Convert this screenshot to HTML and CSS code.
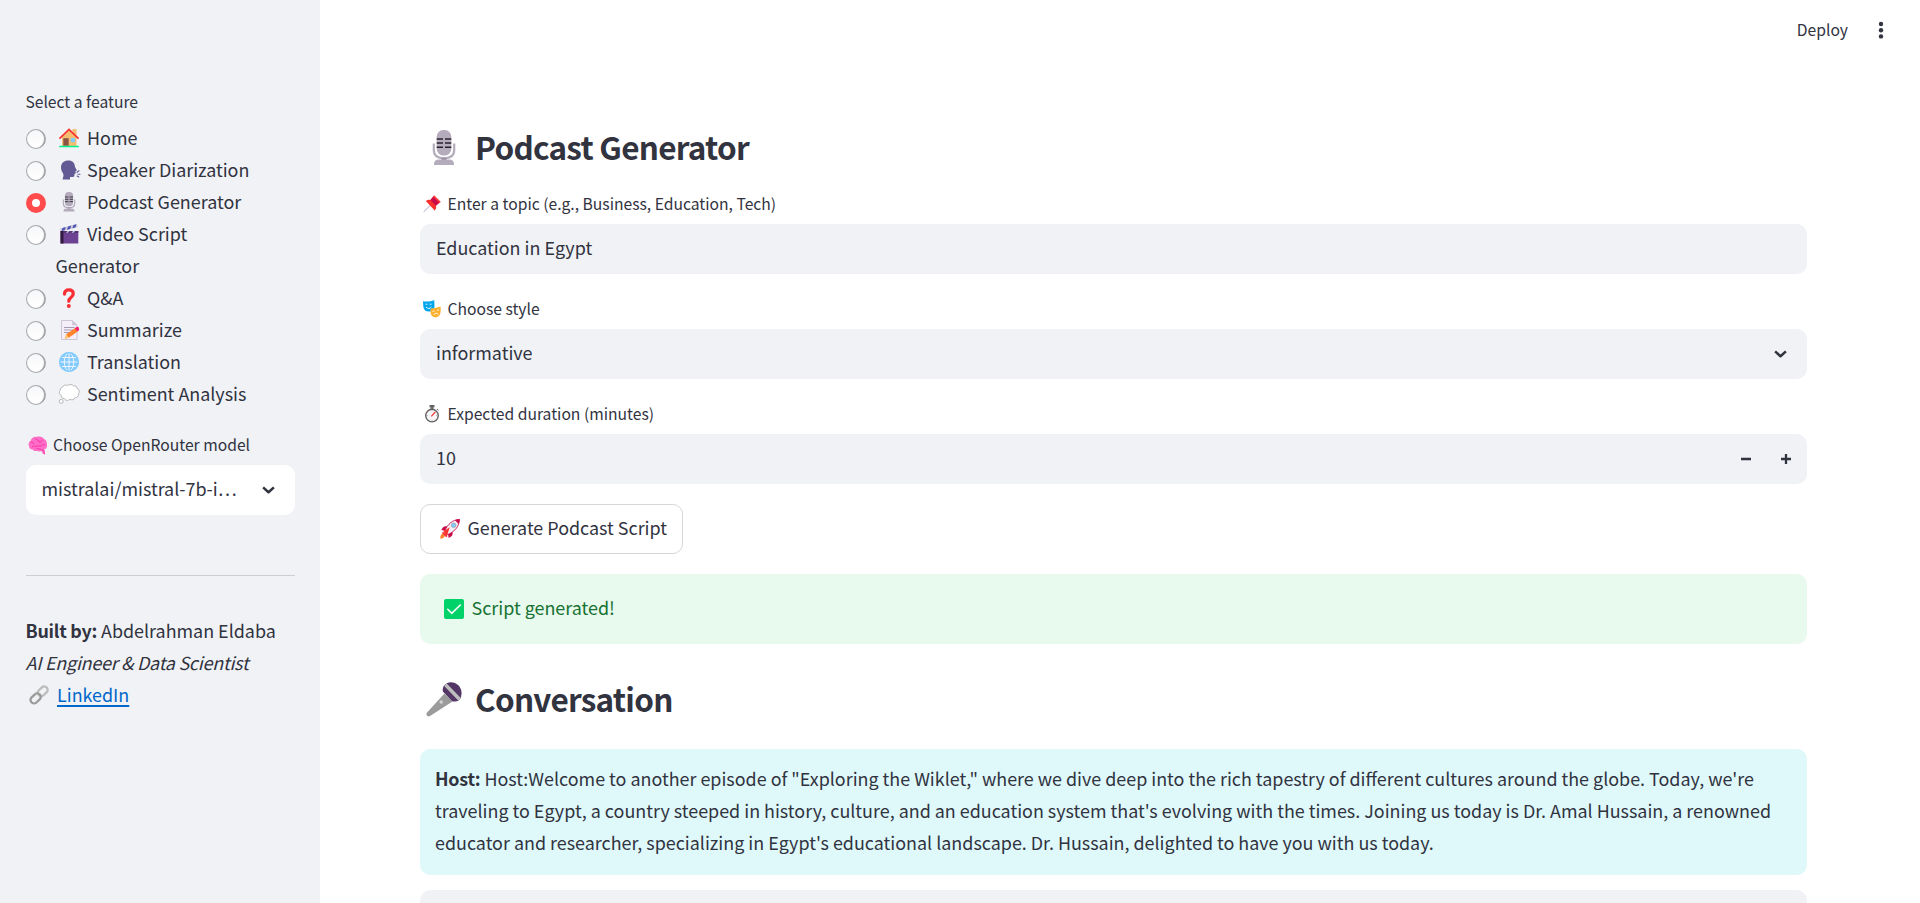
FILE: index.html
```html
<!DOCTYPE html>
<html lang="en">
<head>
<meta charset="utf-8">
<title>Podcast Generator</title>
<link rel="stylesheet" href="styles.css">
</head>
<body>
<svg class="defs" width="0" height="0" aria-hidden="true">
  <symbol id="home" viewBox="0 0 20 20">
    <path d="M13.5 1h4v7h-4zM3 9l7-7 7.5 7v10H3z" fill="#f3bd72"/>
    <path d="M4.3 10.2h5.4v7.6H4.3z" fill="#8c5543"/><path d="M11.8 10h4.2v4.2h-4.2z" fill="#83cbff"/>
    <path d="M1 10.2 10 1.5l9 8.700" fill="none" stroke="#f8312f" stroke-width="1.7" stroke-linecap="round"/>
    <rect y="17.8" width="20" height="1.5" rx=".7" fill="#00f38c"/>
  </symbol>
  <symbol id="speak" viewBox="0 0 20 20">
    <path d="M8 .5C3.500.5.500 3 .5 7.500c0 4 2.500 5 2.500 8 0 1.500-1 2.300-.8 4h7.300v-2.400h2.800c1.600 0 1.800-1 1.600-3l1.500-.8-.5-2 1.500-.7-2-3.800C14.500 3 12 .5 8 .5z" fill="#635994"/>
    <path d="m16.600 12.300 1.900-1.500M17.500 14.300h2M16.600 16l1.700 1" stroke="#635994" stroke-width="1.100" stroke-linecap="round"/>
  </symbol>
  <symbol id="studio" viewBox="0 0 36 36">
    <rect x="10.700" y="0" width="14.600" height="25.500" rx="6.500" fill="#b4acbc"/>
    <path d="M7.800 13.500v7c0 5 3.600 7.700 10.200 7.700s10.200-2.700 10.200-7.700v-7" fill="none" stroke="#b4acbc" stroke-width="2.200"/>
    <path d="M15.500 28h5v2h-5z" fill="#998ea4"/><path d="M8 35c0-4 1.500-5.500 5.500-5.500h9c4 0 5.500 1.500 5.500 5.500z" fill="#b4acbc"/>
    <path d="M10.700 9h6.300m2 0h6.300M10.700 13.100h6.300m2 0h6.300M10.700 17.300h6.300m2 0h6.300" stroke="#28212b" stroke-width="1.500"/>
  </symbol>
  <symbol id="clap" viewBox="0 0 20 20">
    <path d="m1 4.500 17-4.500.6 3L1.800 7.400z" fill="#cdc4d6"/><path d="m3.500 4 3.200-.9-1 3.200-3 .8zM9 2.500l3.200-.9-1 3.300-3.200.8zM14.400 1l3-.8-1 3.200-3 .8z" fill="#4a55b8"/>
    <path d="M1.500 7h17.800v12.500H1.500z" fill="#6d4292"/><path d="M1.500 7h3v12.500h-3z" fill="#321b41"/>
    <path d="M4.500 7h14.800v1.800H4.500z" fill="#533566"/><path d="m7 8.800 1.500-1.800h2l-1.500 1.800zm5.500 0 1.500-1.800h2l-1.500 1.800z" fill="#b9c4f4"/>
  </symbol>
  <symbol id="ques" viewBox="0 0 20 20">
    <path d="M5.500 6C5.500 3.200 7.200 1.900 9.800 1.900c2.800 0 4.400 1.400 4.400 3.900 0 4.200-4.400 3.200-4.400 7.400" fill="none" stroke="#f92f33" stroke-width="3.300" stroke-linecap="round"/>
    <circle cx="9.800" cy="17.900" r="2" fill="#f92f33"/>
  </symbol>
  <symbol id="memo" viewBox="0 0 20 20">
    <path d="M2.500.5h11L18 5v14.500H2.500z" fill="#f3eef8" stroke="#cdc4d6"/><path d="M13.200.5V5.300H18z" fill="#cdc4d6"/>
    <path d="M5 7.500h10.500M5 10h9M5 12.500h7" stroke="#a49bb5"/>
    <path d="m6 18.800 1.200-4.600 9-6.200 2.500 3.600-9 6.200z" fill="#ff822d"/><path d="m6 18.800 1.200-4.600 2.500 3.600z" fill="#ffce7c"/>
    <path d="m15.800 8.200 1.700-1.200c1.800-.8 3.800 1.700 2.300 3.200l-1.700 1.300z" fill="#f8246a"/>
  </symbol>
  <symbol id="globe" viewBox="0 0 20 20">
    <circle cx="10" cy="10" r="9.900" fill="#83cbff"/>
    <g fill="none" stroke="#eef6fd" stroke-width="1"><path d="M10 1v18M1 10h18M2.500 5.500h15M2.500 14.500h15"/><ellipse cx="10" cy="10" rx="4.700" ry="8.900"/></g>
    <circle cx="10" cy="10" r="9.200" fill="none" stroke="#83cbff" stroke-width="1.500"/>
  </symbol>
  <symbol id="cloud" viewBox="0 0 22 20">
    <g fill="#fff" stroke="#a7a7aa" stroke-width=".8"><path d="M4.500 3.200C5 1.200 8 .4 9.500 1.600 11 0 14.300.1 15.500 1.800c2-.4 3.600.7 3.500 2.700 2.300.5 3 3.900 1.300 5.400.6 2.200-1 3.800-3 3.600-1 2.400-3.800 3-5.300 1.600-1.700 2-4.800 1.500-5.700-.6-2 .3-3.300-1.200-2.900-3.100C.8 10.400.9 7.200 2.300 6.500c-.2-1.900.8-3.300 2.200-3.300z"/><circle cx="3.200" cy="17.400" r="2"/></g>
  </symbol>
  <symbol id="brain" viewBox="0 0 20 19">
    <path d="M1 10c-1-2 0-4.500 1.500-5C3.200 2 6 .2 9 .8c3-1 6 .2 7 2.200 2.200.7 3.300 3.200 2.800 5.200.8 2.300-.3 5-2.800 5.300l.5 4.500h-1.600l-1.200-3c-2 .8-3.200.5-4.500-.3-1.500.7-3.400.2-4.500-1.300C2.500 13.500 1 12 1 10z" fill="#ff6dc6"/>
    <path d="M3 6c1.500 0 2.500.8 2.500 2M8 3c1 2 3 1 3.500 3M14 4c0 1.500-1 2.500-2.500 2M4 11c2-1.500 3.500 0 5-1s3 1 4.500-.5 3 .3 3.500-1M8.500 12.500c1 1 3-.5 4.500 1M14 14h2l.5 4" fill="none" stroke="#f92ca5" stroke-width=".9" stroke-linecap="round"/>
  </symbol>
  <symbol id="link" viewBox="0 0 20 20">
    <g fill="none" stroke-width="2.300"><rect x="8.200" y="2.900" width="11" height="6.800" rx="3.400" transform="rotate(-43 13.700 6.300)" stroke="#bcbcbc"/><rect x=".9" y="9.900" width="11.500" height="7" rx="3.500" transform="rotate(-43 6.650 13.400)" stroke="#9b9b9b"/></g>
  </symbol>
  <symbol id="pin" viewBox="0 0 18 17">
    <path d="m1 16.200 6-6" stroke="#cdc4d6" stroke-width="1.200" stroke-linecap="round"/>
    <path d="M2.800 5.600c2-1.800 3.500-1.600 4.700-1.200L11 0l6.500 6.300-4.600 3.900c.5 1.600.3 3.100-1.200 4.800z" fill="#f8312f"/><path d="m7.500 4.400 2.700-3.300 6.200 6-3.500 3.100z" fill="#ca0b4a"/><path d="m10.200 1 1.100-1 6.400 6.400-1.200 1.100z" fill="#ff3b3b"/>
  </symbol>
  <symbol id="masks" viewBox="0 0 18 18">
    <path d="M0 1.200c3 .5 8 .5 11.200-1.200l.3 6.500c0 3-3 5-5.700 5C2.500 11.500.5 9.500.3 6.500z" fill="#00a6ed"/>
    <path d="M7.500 8.700c3.500-.4 6.500-1 10-2.200.4 3 .3 6-.7 8.300-1.500 3-6.300 3.500-8.200.8-1-1.800-1.300-4-1.100-6.900z" fill="#ffb02e"/>
    <path d="M2.600 4.200h1.800m2.300 0h1.800M3 7c1.500 2 4.300 1.900 5.500 0M9.600 11.500l1.900-.6m2.500-.5 1.900-.6M10.800 15c.6-1.900 3-2.300 4.300-.8" fill="none" stroke="#fff" stroke-width=".9"/>
  </symbol>
  <symbol id="watch" viewBox="0 0 18 18">
    <rect x="6.500" y="0" width="5" height="2.300" rx=".6" fill="#636363"/><path d="M8 2h2v2H8zM14 4l1.500 1.400" stroke="#636363" fill="#9b9b9b"/>
    <circle cx="9" cy="10.600" r="6.300" fill="#f7f5f8" stroke="#636363" stroke-width="1.400"/>
    <path d="M9 5.500v1M9 14.700v1M4 10.600h1M13 10.600h1" stroke="#9b9b9b" stroke-width=".7"/><path d="m8.300 11.300 4-4.300" stroke="#f8312f" stroke-width="1.200"/>
  </symbol>
  <symbol id="rocket" viewBox="0 0 20 20">
    <path d="M7 7.500c-2.500-.8-4.500.5-5.600 3.700l4 .4zM12.500 13c.8 2.500-.5 4.500-3.800 6l-.8-4.300z" fill="#ca0b4a"/>
    <path d="M4.300 12.500c4-8 8-11.500 15.200-12.200C19 7.500 15.500 12 7.600 15.700z" fill="#f4f0f5" stroke="#ca0b4a" stroke-width=".9"/><path d="M15 1.300c1.500-.6 3-1 4.600-1 0 1.600-.4 3.200-1 4.700z" fill="#ca0b4a"/>
    <circle cx="13.600" cy="6.300" r="2.300" fill="#83cbff" stroke="#9b9b9b" stroke-width=".7"/><path d="m3.300 11.500 1.500 0 5-3.200-2.500 7.500-1.300 1.500z" fill="#f8312f"/><path d="M.3 19.700c-.2-3 .8-4.700 2.500-4.700 1.600 0 2.400 1.400 1.600 2.800-.7 1.400-2.100 1.800-4.100 1.900z" fill="#ff822d"/>
    <path d="m2.500 13.300 4.300 4.300" stroke="#f8312f" stroke-width="1.800"/>
  </symbol>
  <symbol id="check" viewBox="0 0 20 20"><rect width="20" height="20" rx="2" fill="#00d26a"/><path d="m3.700 10.300 4 4L16.300 6" fill="none" stroke="#fff" stroke-width="1.600" stroke-linecap="round" stroke-linejoin="round"/></symbol>
  <symbol id="mic" viewBox="0 0 36 36">
    <path d="M18.500 11.500.8 30.800c-1.300 2.200 1 4.500 3.200 3.300l22.500-14.700z" fill="#9b9b9b"/>
    <path d="M16.900 9.600c-.8-4 1.100-7.500 5.100-8.600l13.200 13.500c-1 4-4.700 6-9 4.700z" fill="#533566"/>
    <path d="m18.200 4 2.400-2.800L35 16.200l-2.800 2.300z" fill="#bebebe"/><path d="M20.800 1.300C28-2.600 38.500 5 34.800 15.200z" fill="#533566"/>
    <circle cx="15.200" cy="20" r="1.700" fill="#d3d3d3"/>
  </symbol>
  <symbol id="chev" viewBox="0 0 14 8"><path d="m1.200 1.100 5.800 5.300 5.800-5.300" fill="none" stroke="#31333f" stroke-width="2.700" stroke-linejoin="round"/></symbol>
</svg>

<div class="app">
  <aside class="sidebar">
    <p class="small side-label">Select a feature</p>
    <ul class="features">
      <li><span class="radio"></span><span><svg class="ico"><use href="#home"/></svg>Home</span></li>
      <li><span class="radio"></span><span><svg class="ico speak"><use href="#speak"/></svg>Speaker Diarization</span></li>
      <li><span class="radio on"></span><span><svg class="ico"><use href="#studio"/></svg>Podcast Generator</span></li>
      <li><span class="radio"></span><span><svg class="ico"><use href="#clap"/></svg>Video Script<br>Generator</span></li>
      <li><span class="radio"></span><span><svg class="ico"><use href="#ques"/></svg>Q&amp;A</span></li>
      <li><span class="radio"></span><span><svg class="ico"><use href="#memo"/></svg>Summarize</span></li>
      <li><span class="radio"></span><span><svg class="ico"><use href="#globe"/></svg>Translation</span></li>
      <li><span class="radio"></span><span><svg class="ico cloud"><use href="#cloud"/></svg>Sentiment Analysis</span></li>
    </ul>
    <p class="small model-label"><svg class="ico brain"><use href="#brain"/></svg>Choose OpenRouter model</p>
    <div class="field model"><span>mistralai/mistral-7b-i…</span><svg class="chev"><use href="#chev"/></svg></div>
    <hr>
    <div class="credits">
      <p><b>Built by:</b> Abdelrahman Eldaba</p>
      <p class="role">AI Engineer &amp; Data Scientist</p>
      <p><svg class="ico link"><use href="#link"/></svg><a href="#">LinkedIn</a></p>
    </div>
  </aside>

  <div class="page">
    <header class="toolbar"><span class="small">Deploy</span>
      <svg class="dots" viewBox="0 0 6 18"><g fill="#31333f"><circle cx="3" cy="3" r="2.200"/><circle cx="3" cy="9.200" r="2.200"/><circle cx="3" cy="15.400" r="2.200"/></g></svg>
    </header>
    <main class="content">
      <h2><svg class="big"><use href="#studio"/></svg><span class="title">Podcast Generator</span></h2>
      <p class="small label topic"><svg class="ico sm"><use href="#pin"/></svg>Enter a topic (e.g., Business, Education, Tech)</p>
      <div class="field"><span>Education in Egypt</span></div>
      <p class="small label"><svg class="ico sm"><use href="#masks"/></svg>Choose style</p>
      <div class="field"><span>informative</span><svg class="chev"><use href="#chev"/></svg></div>
      <p class="small label"><svg class="ico sm"><use href="#watch"/></svg>Expected duration (minutes)</p>
      <div class="field"><span>10</span>
        <svg class="steps" viewBox="0 0 50 10"><path d="M0 5h10M40 5h10M45 0v10" stroke="#31333f" stroke-width="2.300"/></svg>
      </div>
      <button class="generate" type="button"><svg class="ico"><use href="#rocket"/></svg><span>Generate Podcast Script</span></button>
      <div class="success"><svg class="ico"><use href="#check"/></svg><span>Script generated!</span></div>
      <h2 class="conv"><svg class="big"><use href="#mic"/></svg><span class="title">Conversation</span></h2>
      <div class="bubble host">
        <div><b>Host:</b> Host:Welcome to another episode of "Exploring the Wiklet," where we dive deep into the rich tapestry of different cultures around the globe. Today, we're</div>
        <div>traveling to Egypt, a country steeped in history, culture, and an education system that's evolving with the times. Joining us today is Dr. Amal Hussain, a renowned</div>
        <div>educator and researcher, specializing in Egypt's educational landscape. Dr. Hussain, delighted to have you with us today.</div>
      </div>
      <div class="bubble guest"></div>
    </main>
  </div>
</div>
</body>
</html>
```
FILE: styles.css
```css
* { box-sizing: border-box; }
body {
  margin: 0;
  height: 903px;
  overflow: hidden;
  background: #fff;
  color: #31333f;
  font: 400 17.91px/32px "Noto Sans CJK SC", "Noto Sans", sans-serif;
  white-space: nowrap;
}
p, h2, ul { margin: 0; padding: 0; }
b { letter-spacing: -.25px; }
.defs { display: block; position: absolute; }
.app { display: flex; height: 903px; }
.small { font-size: 15.67px; line-height: 28px; }

.sidebar { width: 320px; flex: none; padding: 88px 25px 0 26px; background: #f0f2f6; }
.side-label { margin-bottom: 5px; text-indent: -.6px; }
.features { list-style: none; }
.features li { display: flex; align-items: flex-start; gap: 9.5px; }
.radio {
  flex: none;
  width: 20px;
  height: 20px;
  margin-top: 8px;
  border: 1px solid #a6a7ab;
  border-right-width: 2px;
  border-radius: 50%;
  background: linear-gradient(#f6f7f9, #fff);
}
.radio.on { border: 6px solid #ff4b4b; background: #fff; }
.ico { width: 20px; height: 20px; margin: 0 8.5px 0 3px; vertical-align: -3px; }
.ico.speak { width: 21px; margin: 0 6.5px 0 4px; }
.ico.cloud { width: 22px; margin: 0 7.5px 0 2px; }
.ico.brain { width: 20px; height: 19px; margin: 0 5px 0 2px; vertical-align: -4px; }
.ico.link { margin: 0 8.5px 0 3px; }
.ico.sm { width: 18px; height: 18px; margin: 0 6.5px 0 3px; }
.model-label { margin: 22px 0 6px; }
.field {
  display: flex;
  align-items: center;
  justify-content: space-between;
  height: 50px;
  padding: 0 20px 0 16px;
  border-radius: 10px;
  background: #f0f2f6;
}
.field span, .generate span, .success span, .title { padding-bottom: 4px; }
.field.model { padding-left: 15.5px; background: #fff; }
.chev { width: 13px; height: 8px; }
.steps { width: 50px; height: 10px; margin-right: -4px; }
hr { height: 1px; margin: 60px 0 38px; border: 0; background: #cdcfd4; }
.credits { margin-left: -.5px; }
.role { font-style: italic; letter-spacing: -.22px; }
a { color: #0068c9; text-underline-offset: 3px; text-decoration-thickness: 2px; }

.page { flex: 1; }
.toolbar { display: flex; align-items: center; justify-content: flex-end; gap: 30px; height: 60px; padding-right: 36px; }
.dots { width: 6px; height: 18px; }
.content { padding: 66px 113px 0 100px; }
h2 { display: flex; align-items: center; gap: 13px; height: 44px; padding-left: 6px; font-size: 31.5px; line-height: 44px; font-weight: 700; letter-spacing: -.75px; }
.big { width: 36px; height: 36px; }
.label { margin: 21px 0 6px; }
.label.topic { margin-top: 20px; }
.generate {
  display: flex;
  align-items: center;
  width: 263px;
  height: 50px;
  margin: 20px 0;
  padding: 0 0 0 16px;
  border: 1px solid #d6d6d9;
  border-radius: 10px;
  background: #fff;
  color: inherit;
  font: inherit;
}
.generate .ico, .success .ico { margin-right: 7.5px; }
.success { display: flex; align-items: center; height: 70px; padding-left: 21px; border-radius: 10px; background: #e8f9ee; color: #177233; }
.conv { margin: 34px 0 27px; }
.bubble { border-radius: 10px; }
.host { height: 126px; padding: 13px 15px; background: #dff9fb; }
.guest { height: 13px; margin-top: 15px; border-radius: 10px 10px 0 0; background: #f0f2f6; }
```
